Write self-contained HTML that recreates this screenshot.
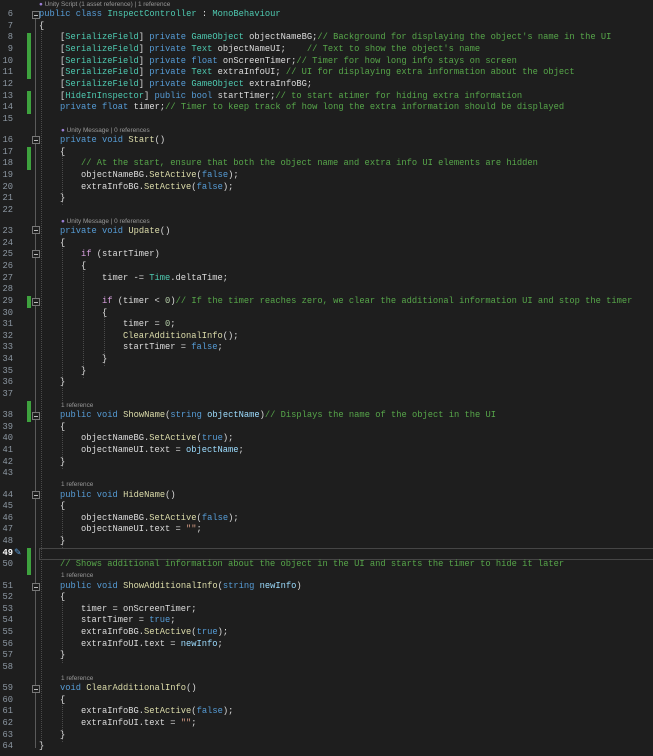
<!DOCTYPE html>
<html><head><meta charset="utf-8"><style>
html,body{margin:0;padding:0;background:#1e1e1e;width:653px;height:756px;overflow:hidden}
#w{position:relative;width:653px;height:756px;font-family:"Liberation Mono",monospace;font-size:8.75px;color:#dcdcdc}
.cl{height:9.5px;line-height:9.5px;font-family:"Liberation Sans",sans-serif;font-size:6.4px;color:#999;position:relative;white-space:pre}
.cl span.t{position:absolute;left:61px;top:0}
.l{height:11.65px;line-height:11.65px;position:relative;white-space:pre}
.n{position:absolute;right:640px;top:0;color:#8d98a3;text-align:right;width:20px}
.c{position:absolute;left:39px;top:0}
.k{color:#569cd6}.t2{color:#4ec9b0}.g{color:#57a64a}.m{color:#dcdcaa}.p{color:#9cdcfe}.nu{color:#b5cea8}.s{color:#d69d85}.f{color:#d8a0df}
.gd{position:absolute;width:0;border-left:1px dotted #4a4a4a}
.bar{position:absolute;left:27px;width:4px;background:#3ea23e}
.ol{position:absolute;left:35px;width:1px;background:#5a5a5a}
.bx{position:absolute;left:32px;width:6px;height:6px;border:1px solid #777;background:#1e1e1e}
.bx:after{content:"";position:absolute;left:1px;top:2.5px;width:4px;height:1px;background:#bbb}
</style></head><body><div id="w">
<div class="ol" style="top:18px;height:730px"></div>
<div class="gd" style="left:41px;top:21px;height:721px"></div>
<div class="gd" style="left:62px;top:147px;height:58px"></div>
<div class="gd" style="left:62px;top:238px;height:163px"></div>
<div class="gd" style="left:83px;top:261px;height:117px"></div>
<div class="gd" style="left:104px;top:308px;height:58px"></div>
<div class="gd" style="left:62px;top:422px;height:47px"></div>
<div class="gd" style="left:62px;top:502px;height:46px"></div>
<div class="gd" style="left:62px;top:593px;height:70px"></div>
<div class="gd" style="left:62px;top:695px;height:47px"></div>
<div class="bar" style="top:32.5px;height:46.6px"></div>
<div class="bar" style="top:90.75px;height:23.3px"></div>
<div class="bar" style="top:146.85px;height:23.3px"></div>
<div class="bar" style="top:296.15px;height:11.65px"></div>
<div class="bar" style="top:401px;height:21px"></div>
<div class="bar" style="top:548.15px;height:27px"></div>
<div style="position:absolute;left:39px;top:548px;width:614px;height:10px;border:1px solid #464646"></div>
<div class="bx" style="top:11px"></div>
<div class="bx" style="top:136px"></div>
<div class="bx" style="top:226px"></div>
<div class="bx" style="top:250px"></div>
<div class="bx" style="top:298px"></div>
<div class="bx" style="top:412px"></div>
<div class="bx" style="top:491px"></div>
<div class="bx" style="top:583px"></div>
<div class="bx" style="top:685px"></div>
<div style="position:absolute;left:0;top:0;width:653px">
<div class="cl" style="height:9.2px"><span class="t" style="left:39px"><span style="color:#9b7fd4">&#9679;</span> Unity Script (1 asset reference) | 1 reference</span></div>
<div class="l"><span class="n">6</span><span class="c"><span class="k">public</span> <span class="k">class</span> <span class="t2">InspectController</span> : <span class="t2">MonoBehaviour</span></span></div>
<div class="l"><span class="n">7</span><span class="c">{</span></div>
<div class="l"><span class="n">8</span><span class="c">    [<span class="t2">SerializeField</span>] <span class="k">private</span> <span class="t2">GameObject</span> objectNameBG;<span class="g">// Background for displaying the object's name in the UI</span></span></div>
<div class="l"><span class="n">9</span><span class="c">    [<span class="t2">SerializeField</span>] <span class="k">private</span> <span class="t2">Text</span> objectNameUI;    <span class="g">// Text to show the object's name</span></span></div>
<div class="l"><span class="n">10</span><span class="c">    [<span class="t2">SerializeField</span>] <span class="k">private</span> <span class="k">float</span> onScreenTimer;<span class="g">// Timer for how long info stays on screen</span></span></div>
<div class="l"><span class="n">11</span><span class="c">    [<span class="t2">SerializeField</span>] <span class="k">private</span> <span class="t2">Text</span> extraInfoUI; <span class="g">// UI for displaying extra information about the object</span></span></div>
<div class="l"><span class="n">12</span><span class="c">    [<span class="t2">SerializeField</span>] <span class="k">private</span> <span class="t2">GameObject</span> extraInfoBG;</span></div>
<div class="l"><span class="n">13</span><span class="c">    [<span class="t2">HideInInspector</span>] <span class="k">public</span> <span class="k">bool</span> startTimer;<span class="g">// to start atimer for hiding extra information</span></span></div>
<div class="l"><span class="n">14</span><span class="c">    <span class="k">private</span> <span class="k">float</span> timer;<span class="g">// Timer to keep track of how long the extra information should be displayed</span></span></div>
<div class="l"><span class="n">15</span></div>
<div class="cl"><span class="t"><span style="color:#9b7fd4">&#9679;</span> Unity Message | 0 references</span></div>
<div class="l"><span class="n">16</span><span class="c">    <span class="k">private</span> <span class="k">void</span> <span class="m">Start</span>()</span></div>
<div class="l"><span class="n">17</span><span class="c">    {</span></div>
<div class="l"><span class="n">18</span><span class="c">        <span class="g">// At the start, ensure that both the object name and extra info UI elements are hidden</span></span></div>
<div class="l"><span class="n">19</span><span class="c">        objectNameBG.<span class="m">SetActive</span>(<span class="k">false</span>);</span></div>
<div class="l"><span class="n">20</span><span class="c">        extraInfoBG.<span class="m">SetActive</span>(<span class="k">false</span>);</span></div>
<div class="l"><span class="n">21</span><span class="c">    }</span></div>
<div class="l"><span class="n">22</span></div>
<div class="cl"><span class="t"><span style="color:#9b7fd4">&#9679;</span> Unity Message | 0 references</span></div>
<div class="l"><span class="n">23</span><span class="c">    <span class="k">private</span> <span class="k">void</span> <span class="m">Update</span>()</span></div>
<div class="l"><span class="n">24</span><span class="c">    {</span></div>
<div class="l"><span class="n">25</span><span class="c">        <span class="f">if</span> (startTimer)</span></div>
<div class="l"><span class="n">26</span><span class="c">        {</span></div>
<div class="l"><span class="n">27</span><span class="c">            timer -= <span class="t2">Time</span>.deltaTime;</span></div>
<div class="l"><span class="n">28</span></div>
<div class="l"><span class="n">29</span><span class="c">            <span class="f">if</span> (timer &lt; <span class="nu">0</span>)<span class="g">// If the timer reaches zero, we clear the additional information UI and stop the timer</span></span></div>
<div class="l"><span class="n">30</span><span class="c">            {</span></div>
<div class="l"><span class="n">31</span><span class="c">                timer = <span class="nu">0</span>;</span></div>
<div class="l"><span class="n">32</span><span class="c">                <span class="m">ClearAdditionalInfo</span>();</span></div>
<div class="l"><span class="n">33</span><span class="c">                startTimer = <span class="k">false</span>;</span></div>
<div class="l"><span class="n">34</span><span class="c">            }</span></div>
<div class="l"><span class="n">35</span><span class="c">        }</span></div>
<div class="l"><span class="n">36</span><span class="c">    }</span></div>
<div class="l"><span class="n">37</span></div>
<div class="cl"><span class="t">1 reference</span></div>
<div class="l"><span class="n">38</span><span class="c">    <span class="k">public</span> <span class="k">void</span> <span class="m">ShowName</span>(<span class="k">string</span> <span class="p">objectName</span>)<span class="g">// Displays the name of the object in the UI</span></span></div>
<div class="l"><span class="n">39</span><span class="c">    {</span></div>
<div class="l"><span class="n">40</span><span class="c">        objectNameBG.<span class="m">SetActive</span>(<span class="k">true</span>);</span></div>
<div class="l"><span class="n">41</span><span class="c">        objectNameUI.text = <span class="p">objectName</span>;</span></div>
<div class="l"><span class="n">42</span><span class="c">    }</span></div>
<div class="l"><span class="n">43</span></div>
<div class="cl"><span class="t">1 reference</span></div>
<div class="l"><span class="n">44</span><span class="c">    <span class="k">public</span> <span class="k">void</span> <span class="m">HideName</span>()</span></div>
<div class="l"><span class="n">45</span><span class="c">    {</span></div>
<div class="l"><span class="n">46</span><span class="c">        objectNameBG.<span class="m">SetActive</span>(<span class="k">false</span>);</span></div>
<div class="l"><span class="n">47</span><span class="c">        objectNameUI.text = <span class="s">""</span>;</span></div>
<div class="l"><span class="n">48</span><span class="c">    }</span></div>
<div class="l"><span class="n" style="color:#fff;font-weight:bold;right:640px">49</span><span style="position:absolute;left:14px;top:0;color:#5b9bd5;font-size:9px">&#x270E;</span></div>
<div class="l"><span class="n">50</span><span class="c">    <span class="g">// Shows additional information about the object in the UI and starts the timer to hide it later</span></span></div>
<div class="cl"><span class="t">1 reference</span></div>
<div class="l"><span class="n">51</span><span class="c">    <span class="k">public</span> <span class="k">void</span> <span class="m">ShowAdditionalInfo</span>(<span class="k">string</span> <span class="p">newInfo</span>)</span></div>
<div class="l"><span class="n">52</span><span class="c">    {</span></div>
<div class="l"><span class="n">53</span><span class="c">        timer = onScreenTimer;</span></div>
<div class="l"><span class="n">54</span><span class="c">        startTimer = <span class="k">true</span>;</span></div>
<div class="l"><span class="n">55</span><span class="c">        extraInfoBG.<span class="m">SetActive</span>(<span class="k">true</span>);</span></div>
<div class="l"><span class="n">56</span><span class="c">        extraInfoUI.text = <span class="p">newInfo</span>;</span></div>
<div class="l"><span class="n">57</span><span class="c">    }</span></div>
<div class="l"><span class="n">58</span></div>
<div class="cl"><span class="t">1 reference</span></div>
<div class="l"><span class="n">59</span><span class="c">    <span class="k">void</span> <span class="m">ClearAdditionalInfo</span>()</span></div>
<div class="l"><span class="n">60</span><span class="c">    {</span></div>
<div class="l"><span class="n">61</span><span class="c">        extraInfoBG.<span class="m">SetActive</span>(<span class="k">false</span>);</span></div>
<div class="l"><span class="n">62</span><span class="c">        extraInfoUI.text = <span class="s">""</span>;</span></div>
<div class="l"><span class="n">63</span><span class="c">    }</span></div>
<div class="l"><span class="n">64</span><span class="c">}</span></div>
</div>
</div></body></html>
